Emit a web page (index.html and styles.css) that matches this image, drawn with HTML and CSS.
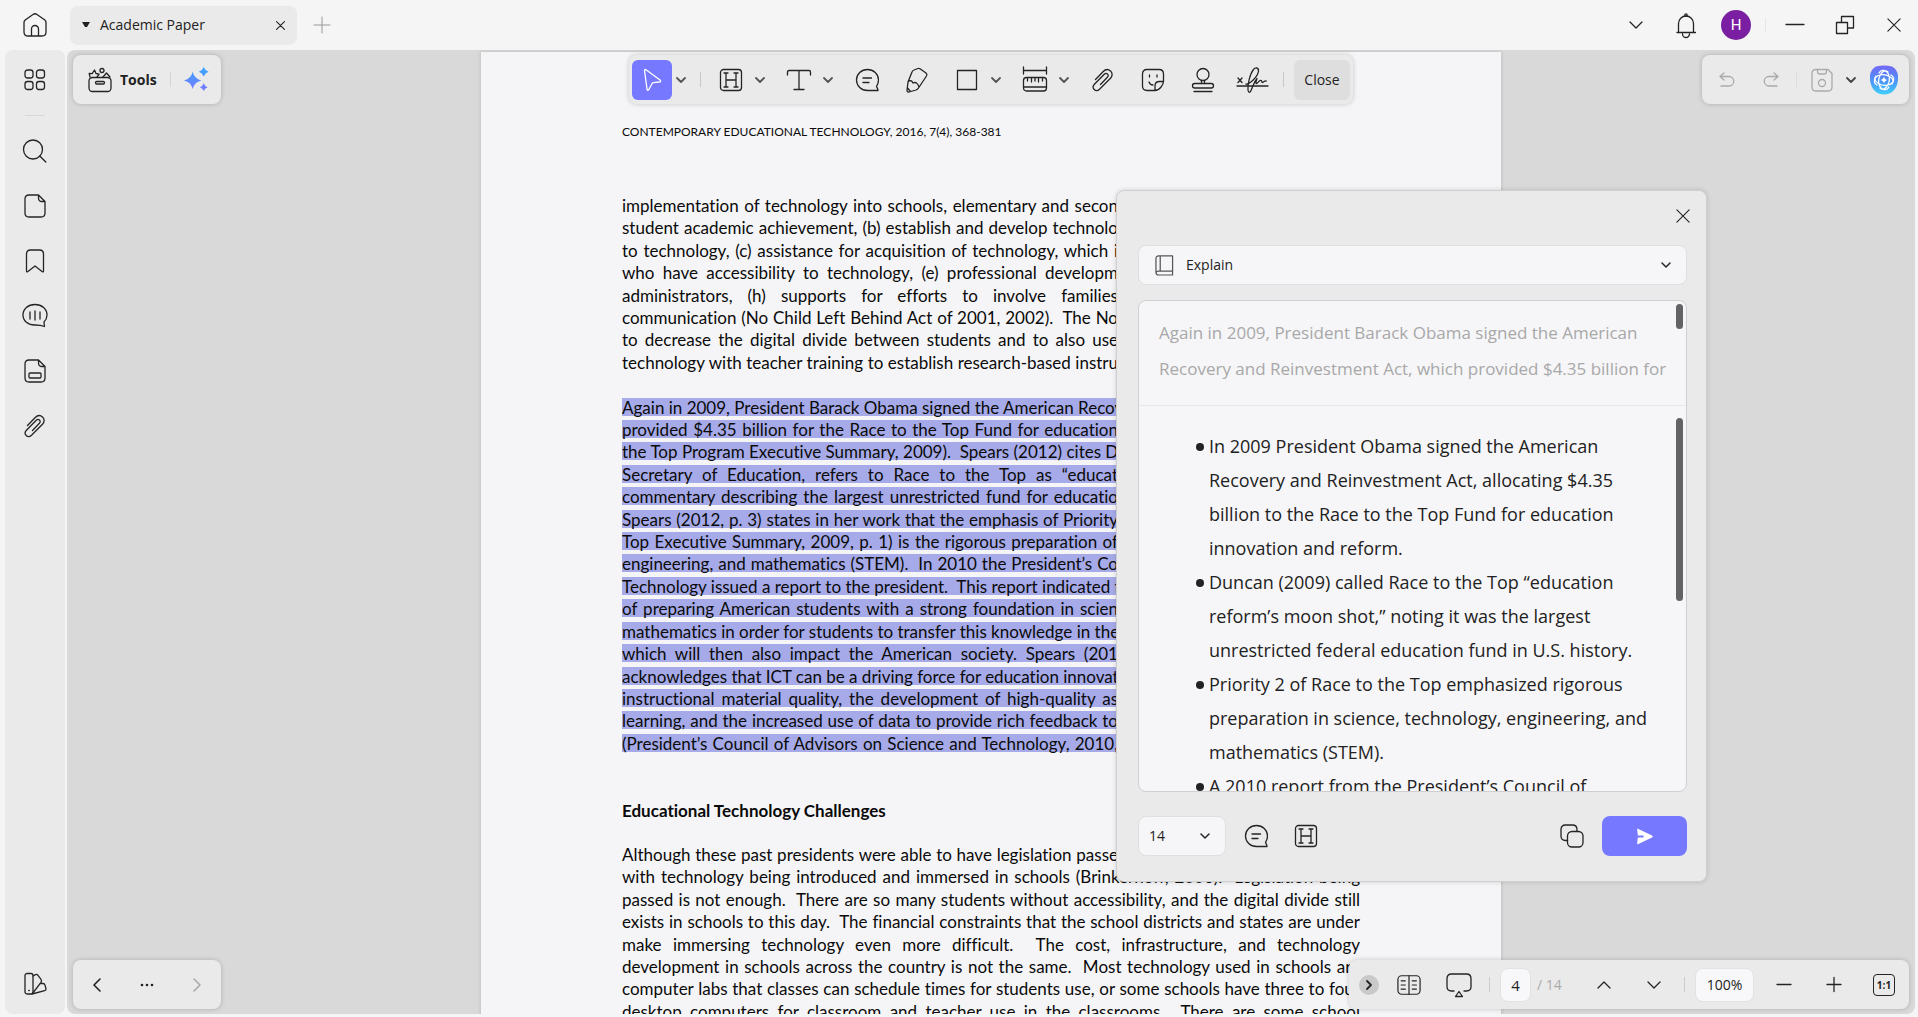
FILE: index.html
```html
<!DOCTYPE html>
<html lang="en">
<head>
<meta charset="utf-8">
<title>Academic Paper</title>
<link rel="stylesheet" href="styles.css">
</head>
<body>
<svg class="sprite" aria-hidden="true">
  <defs>
    <linearGradient id="spark" x1="0" y1="0" x2="0" y2="1"><stop offset="0" stop-color="#36a8ff"/><stop offset="1" stop-color="#7a78ff"/></linearGradient>
    <linearGradient id="ai" x1="0" y1="0" x2="0" y2="1"><stop offset="0" stop-color="#7466f5"/><stop offset=".55" stop-color="#4a96fb"/><stop offset="1" stop-color="#3fd0fb"/></linearGradient>
  </defs>
  <symbol id="chev" viewBox="0 0 12 12"><path d="M2 4l4 4 4-4"/></symbol>
  <symbol id="highlight" viewBox="0 0 24 24"><rect x="1.500" y="1.500" width="21" height="21" rx="3"/><path d="M5 5h4M7 5v14M5 19h4M15 5h4M17 5v14M15 19h4M7 12h10"/></symbol>
  <symbol id="note" viewBox="0 0 24 24"><path d="M23 22.500H12.500A11 10.500 0 1 1 23.500 12c0 2.500-.8 4.500-2 6.500.8 1.500 1.500 2.500 1.500 4zM8 10h8.500M8 14.500h6"/></symbol>
  <symbol id="clip" viewBox="0 0 24 24"><path d="M4.500 11.500l7.500-7.800c2.500-2.600 5.500-2.600 7.500-.8s2.300 4.800 0 7.300L8.500 21.300c-1.700 1.600-4 1.500-5.300.2s-1.400-3.500.2-5.200L13.300 6.200c1-1 2.300-1 3.200-.2s.9 2.200-.1 3.300L9.500 16.500"/></symbol>
  <symbol id="cross" viewBox="0 0 16 16"><path d="M1 1l14 14M15 1L1 15"/></symbol>
</svg>
<div class="app">
  <header class="titlebar">
    <button class="home" aria-label="Home"><svg class="icon24" viewBox="0 0 24 24"><path d="M1 9.500q0-1.500 1.200-2.500L10 1.500q2-1.500 4 0L21.800 7Q23 8 23 9.500V19q0 4-4 4H5q-4 0-4-4zM8.500 23v-7a3.500 3.500 0 0 1 7 0v7"/></svg></button>
    <div class="tab">
      <svg class="caret" viewBox="0 0 8 6"><path d="M0 0h8L5 5H3z"/></svg>
      <span class="tab-name">Academic Paper</span>
      <button class="tab-close" aria-label="Close tab"><svg viewBox="0 0 16 16"><use href="#cross"/></svg></button>
    </div>
    <button class="new-tab" aria-label="New tab"><svg viewBox="0 0 16 16"><path d="M8 0v16M0 8h16"/></svg></button>
    <div class="window-controls">
      <button aria-label="More"><svg class="icon14" viewBox="0 0 14 14"><path d="M1 4l6 6 6-6"/></svg></button>
      <button aria-label="Notifications"><svg class="icon24" viewBox="0 0 24 24"><path d="M3 19.500h18.500M4.500 19V10.500a7.500 7.500 0 0 1 15 0V19M8.500 21a3.500 3.500 0 0 0 7 0"/><circle cx="12" cy="2" r="1.200"/></svg></button>
      <button class="avatar" aria-label="Account">H</button>
      <i class="rule"></i>
      <button aria-label="Minimize"><svg class="icon18" viewBox="0 0 18 18"><path d="M0 8.500h18"/></svg></button>
      <button aria-label="Restore"><svg class="icon18" viewBox="0 0 18 18"><path d="M.5 6.500h11v11H.5zM5.500 6.500v-6h12v11.500h-6"/></svg></button>
      <button class="close-window" aria-label="Close window"><svg class="icon14" viewBox="0 0 16 16"><use href="#cross"/></svg></button>
    </div>
  </header>

  <div class="workspace">
    <nav class="sidebar">
      <button aria-label="Panels"><svg class="icon24" viewBox="0 0 24 24"><rect x="2" y="2" width="8" height="8" rx="2.500"/><rect x="13.500" y="2" width="8" height="8" rx="2.500"/><rect x="2" y="13.500" width="8" height="8" rx="2.500"/><rect x="13.500" y="13.500" width="8" height="8" rx="2.500"/></svg></button>
      <i class="side-rule"></i>
      <button aria-label="Search"><svg class="icon24" viewBox="0 0 24 24"><circle cx="10" cy="10.500" r="9.500"/><path d="M16.800 17l6 6"/></svg></button>
      <button aria-label="Pages"><svg class="icon24" viewBox="0 0 24 24"><path d="M15 1H6Q2 1 2 5v14q0 4 4 4h12q4 0 4-4V7.500L15.500 1v3q0 3.500 3.500 3.500h3"/></svg></button>
      <button aria-label="Bookmarks"><svg class="icon24" viewBox="0 0 24 24"><path d="M3.500 5q0-4 4-4h9q4 0 4 4v17q0 1.500-1.500.5L12 17l-7 5.500q-1.500 1-1.500-.5z"/></svg></button>
      <button aria-label="Comments"><svg class="icon26" viewBox="0 0 26 26"><path d="M22.500 23.500c-2-.8-4-1.500-9.500-1.500C6 22 1 18 1 12S6 1.500 13 1.500 25 6 25 12c0 3-1.500 5.500-3 7 0 2 .5 3.500.5 4.500zM8 9v7M13 8v9M18 9v7"/></svg></button>
      <button aria-label="Fields"><svg class="icon24" viewBox="0 0 24 24"><path d="M15 1H6Q2 1 2 5v14q0 4 4 4h12q4 0 4-4V7.500L15.500 1v3q0 3.500 3.500 3.500h3"/><rect x="6" y="14" width="12" height="5" rx="1"/></svg></button>
      <button aria-label="Attachments"><svg class="icon24" viewBox="0 0 24 24"><use href="#clip"/></svg></button>
      <button class="swatches" aria-label="Themes"><svg class="icon24" viewBox="0 0 24 24"><rect x="2" y="1.500" width="8" height="20.500" rx="2"/><path d="M10 4l2.500-1.300q1.500-.7 2.500.6l3 4q1 1.300 0 3L9.500 21.500M17 11.500h3q1.500 0 2 1.700l1 3.500q.3 1.600-1.300 2L9 22M5.800 18.500h.5"/></svg></button>
    </nav>

    <main class="viewer">
      <article class="page">
        <p class="running-head">CONTEMPORARY EDUCATIONAL TECHNOLOGY, 2016, 7(4), 368-381</p>
        <p class="cut">
          <span>implementation of technology into schools, elementary and secon</span>
          <span>student academic achievement, (b) establish and develop technolo</span>
          <span>to technology, (c) assistance for acquisition of technology, which i</span>
          <span>who have accessibility to technology, (e) professional developm</span>
          <span>administrators, (h) supports for efforts to involve families</span>
          <span>communication (No Child Left Behind Act of 2001, 2002).&nbsp; The No</span>
          <span>to decrease the digital divide between students and to also use</span>
          <span>technology with teacher training to establish research-based instru</span>
        </p>
        <p class="cut">
          <span><mark>Again in 2009, President Barack Obama signed the American Recov</mark></span>
          <span><mark>provided $4.35 billion for the Race to the Top Fund for education</mark></span>
          <span><mark>the Top Program Executive Summary, 2009).&nbsp; Spears (2012) cites D</mark></span>
          <span><mark>Secretary of Education, refers to Race to the Top as “educat</mark></span>
          <span><mark>commentary describing the largest unrestricted fund for educatio</mark></span>
          <span><mark>Spears (2012, p. 3) states in her work that the emphasis of Priority</mark></span>
          <span><mark>Top Executive Summary, 2009, p. 1) is the rigorous preparation of</mark></span>
          <span><mark>engineering, and mathematics (STEM).&nbsp; In 2010 the President’s Co</mark></span>
          <span><mark>Technology issued a report to the president.&nbsp; This report indicated t</mark></span>
          <span><mark>of preparing American students with a strong foundation in scien</mark></span>
          <span><mark>mathematics in order for students to transfer this knowledge in the</mark></span>
          <span><mark>which will then also impact the American society. Spears (201</mark></span>
          <span><mark>acknowledges that ICT can be a driving force for education innovat</mark></span>
          <span><mark>instructional material quality, the development of high-quality as</mark></span>
          <span><mark>learning, and the increased use of data to provide rich feedback to</mark></span>
          <span><mark>(President’s Council of Advisors on Science and Technology, 2010,</mark></span>
        </p>
        <h2>Educational Technology Challenges</h2>
        <p>
          <span class="cut">Although these past presidents were able to have legislation passe</span>
          <span>with technology being introduced and immersed in schools (Brinkerhoff, 2006).&nbsp; Legislation being</span>
          <span>passed is not enough.&nbsp; There are so many students without accessibility, and the digital divide still</span>
          <span>exists in schools to this day.&nbsp; The financial constraints that the school districts and states are under</span>
          <span>make immersing technology even more difficult.&nbsp; The cost, infrastructure, and technology</span>
          <span>development in schools across the country is not the same.&nbsp; Most technology used in schools are</span>
          <span>computer labs that classes can schedule times for students use, or some schools have three to four</span>
          <span>desktop computers for classroom and teacher use in the classrooms.&nbsp; There are some school</span>
        </p>
      </article>

      <div class="float tools">
        <button class="tools-button"><svg class="icon24" viewBox="0 0 24 24"><rect x="1" y="9.500" width="22" height="14" rx="3.500"/><rect x="7.500" y="13.500" width="9" height="2.500" rx="1.200"/><path d="M2 9l-.8-3.500 3 .2L6.500 2l1.500 3.500 3.200.7L9 9M15 9l3.500-4L22 9"/><circle cx="14" cy="2.500" r="2"/></svg>Tools</button>
        <i class="rule"></i>
        <button aria-label="AI tools"><svg class="spark" viewBox="0 0 26 26"><path d="M9 5q1.500 7 9 9-7.500 2-9 9-1.500-7-9-9 7.500-2 9-9zM20.500 0q1.500 3.800 5 5-3.500 1.200-5 5-1.500-3.800-5-5 3.500-1.200 5-5zM20.500 17q1 3 4 4-3 1-4 4-1-3-4-4 3-1 4-4z"/></svg></button>
      </div>

      <div class="float toolbar">
        <div class="group"><button class="tool active" aria-label="Select"><svg class="icon24" viewBox="0 0 24 24"><path d="M4.500 2.500q.2-1.500 1.500-.7L20 12q1.500 1.500-.5 2l-6 .7q-1 .2-1.500 1l-3.300 6q-1.200 1.500-1.600-.2z"/></svg></button><button class="more" aria-label="Select options"><svg viewBox="0 0 12 12"><use href="#chev"/></svg></button></div>
        <i class="rule"></i>
        <div class="group"><button class="tool" aria-label="Highlight"><svg class="icon24" viewBox="0 0 24 24"><use href="#highlight"/></svg></button><button class="more" aria-label="Highlight options"><svg viewBox="0 0 12 12"><use href="#chev"/></svg></button></div>
        <div class="group"><button class="tool" aria-label="Text"><svg class="icon24" viewBox="0 0 24 24"><path d="M.5 7V4q0-1.500 1.500-1.500h20q1.500 0 1.500 1.500v3M12 2.500v19M7 21.500h10"/></svg></button><button class="more" aria-label="Text options"><svg viewBox="0 0 12 12"><use href="#chev"/></svg></button></div>
        <button class="tool" aria-label="Note"><svg class="icon24" viewBox="0 0 24 24"><use href="#note"/></svg></button>
        <button class="tool" aria-label="Pencil"><svg class="icon24" viewBox="0 0 24 24"><path d="M3 14l4-10q.5-1.500 2-2l4-1.500q1-.3 2 .3l6 4.200q1.500 1.200.5 3L13.500 20q-1 1.500-2.500 2l-7 2q-2 .4-2-1.500zM3 14q3-3 5 1 4-2 6 4M2.500 20l3 3.500"/></svg></button>
        <div class="group"><button class="tool" aria-label="Shape"><svg class="icon24" viewBox="0 0 24 24"><path d="M2.500 2.500h19v19h-19z"/></svg></button><button class="more" aria-label="Shape options"><svg viewBox="0 0 12 12"><use href="#chev"/></svg></button></div>
        <div class="group"><button class="tool" aria-label="Measure"><svg class="icon26" viewBox="0 0 26 26"><path d="M1.500 0v7M24.500 0v7M1.500 3.500h23M5.500 11v3M9.500 11v4M13 11v3M16.500 11v4M20.500 11v3M2 20h22"/><rect x="1.500" y="10.500" width="23" height="13.500" rx="3"/></svg></button><button class="more" aria-label="Measure options"><svg viewBox="0 0 12 12"><use href="#chev"/></svg></button></div>
        <button class="tool" aria-label="Attach file"><svg class="icon24" viewBox="0 0 24 24"><use href="#clip"/></svg></button>
        <button class="tool" aria-label="Sticker"><svg class="icon24" viewBox="0 0 24 24"><path d="M14 22.500H6q-4.500 0-4.500-4.500V6Q1.500 1.500 6 1.500h12q4.500 0 4.500 4.500v7c0 4-4 9.500-8.500 9.500zM14 22.500V18q0-4.500 4.500-4.500h4M8.500 7v2M16 7v2M8 14q1 3 4 3"/></svg></button>
        <button class="tool" aria-label="Stamp"><svg class="icon24" viewBox="0 0 24 24"><circle cx="12" cy="6.500" r="6"/><path d="M10.500 12.500v3M13.500 12.500v3M3 23.500h18"/><rect x="1.500" y="15.500" width="21" height="4.500" rx="2.200"/></svg></button>
        <button class="tool" aria-label="Sign"><svg class="signature" viewBox="0 0 32 26"><path d="M0 19h31M1 11l4 4.500M5 11l-4 4.500M9 17c3 .5 12-7 12.500-13 .2-3.500-3-4-5-1.500-4 5-6 16-5.500 20.500.4 3 2 3 3 .5 2-4 2.500-8 6-12-1.500 4-1.500 6 .3 4.500 2-1.500 2.500-3.500 4-2.500 1 .8 0 3 2 1.500 1.200-.8 2-1.500 3-1"/></svg></button>
        <i class="rule"></i>
        <button class="close-tools">Close</button>
      </div>

      <div class="float history">
        <button aria-label="Undo"><svg class="icon16" viewBox="0 0 16 16"><path d="M5 1L1 4.500 5 8M1 4.500h9a4.700 4.700 0 0 1 0 9.500H2"/></svg></button>
        <button aria-label="Redo"><svg class="icon16" viewBox="0 0 16 16"><path d="M11 1l4 3.500L11 8M15 4.500H6a4.700 4.700 0 0 0 0 9.500h8"/></svg></button>
        <i class="rule"></i>
        <button class="save" aria-label="Save"><svg class="icon24" viewBox="0 0 24 24"><path d="M6 1.500h12l4 4V19q0 4-4 4H6q-4 0-4-4V5.500q0-4 4-4zM7.500 1.500v2q0 2.500 2.500 2.500h4q2.500 0 2.500-2.500v-2"/><circle cx="12" cy="15" r="3.500"/></svg></button>
        <button class="more" aria-label="Save options"><svg viewBox="0 0 12 12"><use href="#chev"/></svg></button>
        <button class="assistant" aria-label="Assistant"><svg viewBox="0 0 30 30"><path class="blob" d="M7 1.500Q15-.5 23 1.500q5 2.500 6 9 .5 9-3.500 14-4 5-10.500 5t-10.500-5Q.5 19 1 10.500 2 4 7 1.500z"/><path class="knot" d="M10 8c1.500-3 5-3.500 7.500-1.500 3.500 3 4 9.500 1 14-1.500 3-5 5-7.500 2.500M22 10c3 1.500 3.500 5 1.500 7.500-3 3.500-9.500 4-14 1-3-1.500-5-5-2.500-7.500M20 22c-1.500 3-5 3.500-7.500 1.500-3.500-3-4-9.500-1-14 1.500-3 5-5 7.500-2.500M8 20c-3-1.500-3.500-5-1.500-7.500 3-3.500 9.500-4 14-1 3 1.500 5 5 2.500 7.500"/><path class="star" d="M15 12q.8 2.300 3 3-2.200.8-3 3-.8-2.200-3-3 2.200-.8 3-3z"/></svg></button>
      </div>

      <section class="assistant-panel" aria-label="Explain">
        <button class="panel-close" aria-label="Close panel"><svg class="icon14" viewBox="0 0 16 16"><use href="#cross"/></svg></button>
        <label class="picker action-picker">
          <svg class="book" viewBox="0 0 20 22"><path d="M18.500 17.500V.8H4Q1 .8 1 4v14q0 3 3 3h14.500M1 18.500q.5-1.500 2.500-1.500h15v4M5.500 1v16"/></svg>
          <select aria-label="Action"><option>Explain</option></select>
          <svg class="arrow" viewBox="0 0 12 12"><use href="#chev"/></svg>
        </label>
        <div class="conversation">
          <div class="source">
            <p>Again in 2009, President Barack Obama signed the American<br>Recovery and Reinvestment Act, which provided $4.35 billion for</p>
            <i class="thumb"></i>
          </div>
          <div class="answer">
            <ul>
              <li>In 2009 President Obama signed the American<br>Recovery and Reinvestment Act, allocating $4.35<br>billion to the Race to the Top Fund for education<br>innovation and reform.</li>
              <li>Duncan (2009) called Race to the Top “education<br>reform’s moon shot,” noting it was the largest<br>unrestricted federal education fund in U.S. history.</li>
              <li>Priority 2 of Race to the Top emphasized rigorous<br>preparation in science, technology, engineering, and<br>mathematics (STEM).</li>
              <li>A 2010 report from the President’s Council of</li>
            </ul>
            <i class="thumb"></i>
          </div>
        </div>
        <div class="panel-actions">
          <label class="picker size-picker">
            <select aria-label="Text size"><option>14</option></select>
            <svg class="arrow" viewBox="0 0 12 12"><use href="#chev"/></svg>
          </label>
          <button aria-label="Add note"><svg class="icon24" viewBox="0 0 24 24"><use href="#note"/></svg></button>
          <button aria-label="Highlight"><svg class="icon24" viewBox="0 0 24 24"><use href="#highlight"/></svg></button>
          <button class="copy" aria-label="Copy"><svg class="icon24" viewBox="0 0 24 24"><path d="M7.500 16.500H5.500q-4.500 0-4.500-4.500V5.500Q1 1 5.500 1h7Q17 1 17 5.500v2"/><rect x="7.500" y="7.500" width="15.500" height="15.500" rx="4.500"/></svg></button>
          <button class="send" aria-label="Send"><svg viewBox="0 0 18 18"><path d="M2 .8L17 8q1.500 1 0 2L2 17.200q-1 .3-.8-.8L2 10h6V8H2L1.200 1.600Q1 .5 2 .8z"/></svg></button>
        </div>
      </section>

      <div class="float step-nav">
        <button aria-label="Back"><svg class="icon14" viewBox="0 0 14 14"><path d="M10 1L4 7l6 6"/></svg></button>
        <button aria-label="More steps"><svg class="dots" viewBox="0 0 14 4"><circle cx="2" cy="2" r="1.300"/><circle cx="7" cy="2" r="1.300"/><circle cx="12" cy="2" r="1.300"/></svg></button>
        <button class="dim" aria-label="Forward"><svg class="icon14" viewBox="0 0 14 14"><path d="M4 1l6 6-6 6"/></svg></button>
      </div>

      <div class="float page-nav">
        <button class="collapse" aria-label="Collapse"><svg viewBox="0 0 12 12"><path d="M4 2l4 4-4 4"/></svg></button>
        <button aria-label="Page layout"><svg class="icon24" viewBox="0 0 26 24"><rect x="1" y="2" width="24" height="20" rx="4"/><path d="M13 2v20M4.500 7.500H9M4.500 12H9M4.500 16.500H9M16.500 7.500H21M16.500 12H21M16.500 16.500H21"/></svg></button>
        <button aria-label="Present"><svg class="icon26" viewBox="0 0 26 26"><path d="M8 19H5.500q-4.500 0-4.500-4.500V6.500Q1 2 5.500 2h15Q25 2 25 6.500v8q0 4.500-4.500 4.500H18M13 19.500l3.500 5h-7z"/></svg></button>
        <i class="rule"></i>
        <input class="page-input" aria-label="Page" value="4">
        <span class="total">/ 14</span>
        <button aria-label="Previous page"><svg class="icon14" viewBox="0 0 14 14"><path d="M1 10l6-6 6 6"/></svg></button>
        <button aria-label="Next page"><svg class="icon14" viewBox="0 0 14 14"><path d="M1 4l6 6 6-6"/></svg></button>
        <i class="rule"></i>
        <input class="zoom-input" aria-label="Zoom" value="100%">
        <button aria-label="Zoom out"><svg class="icon14" viewBox="0 0 14 14"><path d="M0 6.500h14"/></svg></button>
        <button aria-label="Zoom in"><svg class="icon14" viewBox="0 0 14 14"><path d="M0 6.500h14M7-.5v14"/></svg></button>
        <button class="actual" aria-label="Actual size">1:1</button>
      </div>
    </main>
  </div>
</div>
</body>
</html>
```
FILE: styles.css
```css
* { box-sizing: border-box; }

body {
  margin: 0;
  background: #f5f5f5;
  color: #222;
  font: 14px/20px "Open Sans", "Noto Sans", sans-serif;
}

button {
  display: flex;
  align-items: center;
  justify-content: center;
  flex: none;
  padding: 0;
  border: 0;
  background: none;
  color: inherit;
  font: inherit;
}

svg {
  flex: none;
  fill: none;
  stroke: #242424;
  stroke-width: 1.3;
  stroke-linecap: round;
  stroke-linejoin: round;
  overflow: visible;
}

.sprite { position: absolute; width: 0; height: 0; }
.icon14 { width: 14px; height: 14px; }
.icon16 { width: 16px; height: 16px; }
.icon18 { width: 18px; height: 18px; }
.icon24 { width: 24px; height: 24px; }
.icon26 { width: 26px; height: 26px; }

.rule { flex: none; width: 1px; height: 15px; background: #d4d4d4; }

.app { display: flex; flex-direction: column; height: 100vh; }

/* Title bar */
.titlebar { display: flex; align-items: center; flex: none; height: 50px; }
.home { width: 70px; height: 40px; }
.tab {
  display: flex;
  align-items: center;
  width: 227px;
  height: 39px;
  padding: 0 12px;
  border-radius: 8px;
  background: #eaeaea;
}
.caret { width: 8px; height: 6px; fill: #222; stroke: none; }
.tab-name { flex: 1; margin-left: 10px; }
.tab-close { width: 10px; height: 20px; }
.tab-close svg { width: 9px; height: 9px; stroke-width: 2; }
.new-tab { width: 50px; height: 40px; }
.new-tab svg { width: 16px; height: 16px; stroke: #999; stroke-width: 1; }
.window-controls { display: flex; align-items: center; margin-left: auto; }
.window-controls button { width: 50px; height: 40px; }
.window-controls .rule { margin: 0 4px 0 14px; background: #e6e6e6; }
.window-controls .close-window { width: 48px; }
.window-controls .avatar {
  width: 30px;
  height: 30px;
  margin-left: 10px;
  border-radius: 50%;
  background: #7b1fa2;
  color: #fff;
  font: 15px/30px Roboto, sans-serif;
}

/* Workspace */
.workspace { display: flex; flex: 1; gap: 2px; min-height: 0; padding: 0 3px 3px 5px; }
.sidebar {
  display: flex;
  flex-direction: column;
  align-items: center;
  flex: none;
  width: 60px;
  padding: 10px 0;
  border-radius: 8px;
  background: #eaeaea;
}
.sidebar button { width: 40px; height: 40px; margin-bottom: 15px; }
.side-rule { width: 20px; height: 1px; margin-bottom: 15px; background: #d8d8d8; }
.sidebar .swatches { margin: auto 0 0; }

.viewer {
  position: relative;
  flex: 1;
  overflow: hidden;
  border-radius: 8px;
  background: #d9d9da;
}

/* Document */
.page {
  width: 1020px;
  min-height: 100%;
  margin: 2px auto 0;
  padding: 70px 141px 0;
  background: #f5f5f7;
  box-shadow: 0 0 4px rgba(0, 0, 0, .15);
  color: #0a0a0a;
  font: 16px/1.4em Lato, sans-serif;
  font-variant-ligatures: none;
}
.page p, .page h2 { margin: 0 0 1.4em; }
.page .running-head { height: 20px; margin-bottom: 53px; font-size: 12px; line-height: 20px; }
.page p span {
  display: block;
  font-size: 17px;
  white-space: nowrap;
  text-align: justify;
  text-align-last: justify;
}
.page .cut { max-width: 496px; }
.page mark {
  background: linear-gradient(#a6aae8, #a6aae8) 0 1px / 100% 18px no-repeat;
  color: inherit;
}
.page h2 { padding-top: 22px; margin-bottom: 22px; font-size: 17px; }

/* Floating bars */
.float {
  position: absolute;
  display: flex;
  align-items: center;
  height: 49px;
  border-radius: 8px;
  background: #eaeaea;
  box-shadow: 0 0 5px rgba(0, 0, 0, .2);
}
.more { width: 18px; height: 40px; }
.more svg { width: 12px; height: 12px; stroke: #555; stroke-width: 1.8; }

.tools { top: 5px; left: 6px; gap: 13px; padding: 0 12px 0 15px; }
.tools-button { gap: 8px; font-weight: 700; }
.spark { width: 25px; height: 25px; fill: url(#spark); stroke: none; }

.toolbar { top: 5px; left: 50%; gap: 10px; padding: 0 3px; transform: translateX(-50%); }
.group { display: flex; }
.tool { width: 40px; height: 40px; }
.active { border-radius: 6px; background: #7679ff; }
.active svg { stroke: #fff; }
.signature { width: 32px; height: 26px; }
.toolbar .rule { background: #c8c8c8; }
.close-tools { width: 56px; height: 40px; border-radius: 6px; background: #dedede; font-size: 14px; }

.history { top: 5px; right: 6px; padding: 0 5px; }
.history button { height: 40px; }
.history button:not(.more) { width: 40px; }
.history button + button:not(.more) { margin-left: 4px; }
.history .rule { margin: 0 5px; background: #ddd; }
.history svg { stroke: #aaa; }
.history .more svg { stroke: #444; }
.history .assistant svg { width: 30px; height: 30px; }
.history .blob { fill: url(#ai); stroke: none; }
.history .knot { stroke: #fff; }
.history .star { fill: #fff; stroke: none; }

/* Assistant panel */
.assistant-panel {
  position: absolute;
  top: 140px;
  right: 208px;
  width: 591px;
  padding: 13px 19px 25px 21px;
  border: 1px solid #cfcfcf;
  border-radius: 8px;
  background: #eaeaeb;
  box-shadow: 0 0 5px rgba(0, 0, 0, .15);
}
.panel-close { width: 24px; height: 24px; margin: 0 -8px 17px auto; }
.picker {
  position: relative;
  display: flex;
  align-items: center;
  height: 40px;
  border: 1px solid #dfdfdf;
  border-radius: 8px;
  background: #f6f6f8;
}
.picker select {
  width: 100%;
  height: 100%;
  border: 0;
  border-radius: 8px;
  background: none;
  color: #222;
  font: inherit;
  appearance: none;
}
.action-picker select { padding: 0 40px 0 47px; }
.size-picker { width: 88px; }
.size-picker select { padding: 0 30px 0 10px; }
.arrow { position: absolute; right: 14px; width: 12px; height: 12px; stroke-width: 1.5; pointer-events: none; }
.book { position: absolute; left: 16px; width: 19px; height: 21px; stroke: #555; pointer-events: none; }

.conversation {
  height: 492px;
  margin: 15px 0 24px;
  overflow: hidden;
  border: 1px solid #cfcfd1;
  border-radius: 8px;
  background: #f6f6f8;
  font-size: 18px;
}
.source {
  position: relative;
  height: 105px;
  padding: 14px 20px;
  border-bottom: 1px solid #e8e8ea;
  color: #a8a8a8;
  font-size: 17px;
  line-height: 36px;
}
.source p { margin: 0; white-space: nowrap; }
.answer { position: relative; padding-top: 23px; line-height: 34px; }
.answer ul { margin: 0; padding-left: 70px; list-style: none; white-space: nowrap; }
.answer li { position: relative; }
.answer li::before {
  content: "";
  position: absolute;
  top: 14px;
  left: -13px;
  width: 8px;
  height: 8px;
  border-radius: 50%;
  background: #222;
}
.thumb { position: absolute; top: 3px; right: 3px; width: 7px; height: 25px; border-radius: 4px; background: #636366; }
.answer .thumb { top: 12px; height: 183px; }

.panel-actions { display: flex; align-items: center; }
.panel-actions > button { width: 40px; height: 40px; margin-left: 10px; }
.panel-actions > .copy { margin-left: auto; }
.panel-actions > .send { width: 85px; border-radius: 8px; background: #7679ff; }
.send svg { width: 17px; height: 17px; fill: #fff; stroke: none; }

/* Bottom bars */
.step-nav { bottom: 5px; left: 6px; justify-content: space-between; width: 148px; padding: 0 14px; }
.step-nav button { width: 20px; height: 40px; }
.step-nav svg { stroke-width: 1.6; }
.step-nav .dots { width: 14px; height: 4px; fill: #222; stroke: none; }
.dim svg { stroke: #aaa; }

.page-nav { right: 6px; bottom: 5px; width: 560px; padding: 0 0 0 10px; }
.page-nav button { width: 50px; height: 40px; }
.page-nav .collapse { width: 20px; height: 20px; margin-right: 5px; border-radius: 50%; background: #c9c9c9; }
.collapse svg { width: 12px; height: 12px; stroke-width: 1.8; }
.page-nav .rule { margin: 0 10px 0 5px; background: #ccc; }
.page-nav input {
  height: 34px;
  padding: 0;
  border: 1px solid #e2e2e2;
  border-radius: 8px;
  background: #f8f8fa;
  color: #222;
  font: inherit;
  text-align: center;
}
.page-nav .page-input { width: 31px; font-size: 15px; }
.page-nav .zoom-input { width: 59px; margin-right: 5px; }
.total { width: 48px; padding-left: 6px; color: #aaa; white-space: nowrap; }
.page-nav .actual {
  width: 22px;
  height: 22px;
  margin: 0 auto;
  border: 1px solid #242424;
  border-radius: 4px;
  font-size: 10px;
  font-weight: 700;
}
```
